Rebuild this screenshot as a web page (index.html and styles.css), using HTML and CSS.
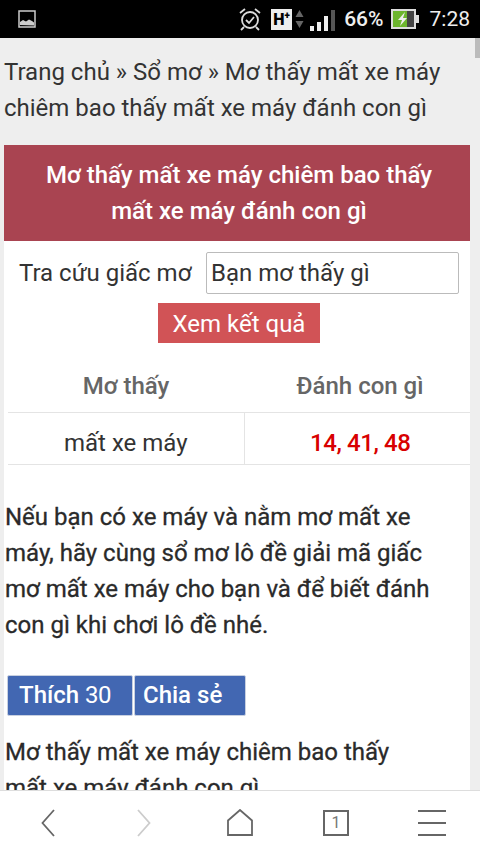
FILE: index.html
```html
<!DOCTYPE html>
<html lang="vi">
<head>
    <meta charset="UTF-8">
    <meta name="viewport" content="width=device-width, initial-scale=1.0">
    <title>Mơ thấy mất xe máy</title>
    <link rel="stylesheet" href="styles.css">
</head>
<body>
    <div class="status-bar">
        <svg class="pic-icon" width="18" height="18" viewBox="0 0 18 18">
            <rect x="1" y="1" width="16" height="16" fill="none" stroke="#ccc" stroke-width="1.5"/>
            <path d="M2 15v-3l3-2 3 1.500 3-2 3 1.500 2 1.500v3z" fill="#ccc"/>
        </svg>
        <div class="status-right">
            <svg class="alarm" width="24" height="24" viewBox="0 0 24 24" fill="none" stroke="#ddd">
                <circle cx="12" cy="13" r="8" stroke-width="1.800"/>
                <path d="M8 13l3 3 5-6" stroke-width="1.800"/>
                <path d="M2 6l5-4M22 6l-5-4M6 20l-3 3M18 20l3 3" stroke-width="1.800"/>
            </svg>
            <span class="net-badge">H<sup>+</sup></span>
            <svg class="net-arrows" width="9" height="20" viewBox="0 0 9 20">
                <path d="M4.500 1l4 7h-8z" fill="#666"/>
                <path d="M4.500 19l4-7h-8z" fill="#666"/>
            </svg>
            <svg class="signal" width="25" height="22" viewBox="0 0 25 22">
                <rect x="0" y="16" width="4" height="5" fill="#eee"/>
                <rect x="7" y="12" width="4" height="9" fill="#eee"/>
                <rect x="14" y="6" width="4" height="15" fill="#eee"/>
                <rect x="21" y="0" width="4" height="21" fill="#555"/>
            </svg>
            <span class="batt-text">66%</span>
            <svg class="battery" width="28" height="20" viewBox="0 0 28 20">
                <rect x="0" y="0" width="25" height="20" fill="#ddd"/>
                <rect x="2" y="2" width="14" height="16" fill="#6cb52d"/>
                <rect x="16" y="2" width="7" height="16" fill="#444"/>
                <rect x="25" y="6" width="3" height="8" fill="#ddd"/>
                <path d="M14 3l-7 8h4l-2 6 7-8h-4z" fill="#eee"/>
            </svg>
            <span class="clock">7:28</span>
        </div>
    </div>

    <div class="viewport">
        <div class="scroll-thumb"></div>
        <div class="page">
            <p class="breadcrumb">Trang chủ » Sổ mơ » Mơ thấy mất xe máy chiêm bao thấy mất xe máy đánh con gì</p>

            <h1 class="title">Mơ thấy mất xe máy chiêm bao thấy<br>mất xe máy đánh con gì</h1>

            <div class="content">
                <div class="search-row">
                    <label for="dream">Tra cứu giấc mơ</label>
                    <input type="text" id="dream" placeholder="Bạn mơ thấy gì">
                </div>
                <div class="search-action">
                    <button class="search-btn">Xem kết quả</button>
                </div>

                <table class="dream-table">
                    <tr>
                        <th>Mơ thấy</th>
                        <th>Đánh con gì</th>
                    </tr>
                    <tr>
                        <td>mất xe máy</td>
                        <td class="numbers">14, 41, 48</td>
                    </tr>
                </table>

                <p class="intro">Nếu bạn có xe máy và nằm mơ mất xe máy, hãy cùng sổ mơ lô đề giải mã giấc mơ mất xe máy cho bạn và để biết đánh con gì khi chơi lô đề nhé.</p>

                <div class="social">
                    <a class="fb-btn like">Thích <span class="count">30</span></a>
                    <a class="fb-btn share">Chia sẻ</a>
                </div>

                <p class="article">Mơ thấy mất xe máy chiêm bao thấy mất xe máy đánh con gì</p>
            </div>
        </div>
    </div>

    <nav class="bottom-nav">
        <svg width="14" height="28" viewBox="0 0 14 28" fill="none" stroke="#666" stroke-width="1.800"><path d="M13 1L1.500 14 13 27"/></svg>
        <svg width="14" height="28" viewBox="0 0 14 28" fill="none" stroke="#ccc" stroke-width="1.800"><path d="M1 1l11.500 13L1 27"/></svg>
        <svg width="26" height="27" viewBox="0 0 26 27" fill="none" stroke="#666" stroke-width="1.800"><path d="M1 11.500L13 1l12 10.500V26H1z"/></svg>
        <span class="tab-count">1</span>
        <div class="menu-icon"><i></i><i></i><i></i></div>
    </nav>
</body>
</html>
```

FILE: styles.css
```css
* {
    box-sizing: border-box;
}
html, body {
    margin: 0;
    padding: 0;
}
body {
    width: 480px;
    height: 854px;
    overflow: hidden;
    display: flex;
    flex-direction: column;
    font-family: Roboto, sans-serif;
    background-color: #eee;
}

/* status bar */
.status-bar {
    height: 38px;
    flex: none;
    background-color: #000;
    display: flex;
    align-items: center;
    justify-content: space-between;
    padding: 0 10px 0 18px;
}
.status-right {
    display: flex;
    align-items: center;
}
.net-badge {
    width: 21px;
    height: 21px;
    margin-left: 9px;
    background-color: #eee;
    color: #000;
    font-size: 16px;
    font-weight: 900;
    line-height: 21px;
    text-align: center;
}
.net-badge sup {
    font-size: 10px;
    line-height: 0;
}
.net-arrows {
    margin-left: 3px;
}
.signal {
    margin-left: 6px;
    margin-top: 3px;
}
.batt-text {
    margin-left: 9px;
    color: #eee;
    font-size: 21px;
    font-weight: 500;
}
.battery {
    margin-left: 7px;
}
.clock {
    margin-left: 11px;
    color: #eee;
    font-size: 21px;
    font-weight: 400;
}

/* page area */
.viewport {
    flex: 1;
    position: relative;
    overflow: hidden;
    min-height: 0;
}
.scroll-thumb {
    position: absolute;
    top: 0;
    right: 0;
    width: 5px;
    height: 20px;
    background-color: #bbb;
}
.page {
    padding: 16px 10px 0 4px;
}
.breadcrumb {
    margin: 0 0 19px 0;
    font-size: 24px;
    line-height: 36px;
    color: #333;
}
.title {
    margin: 0;
    padding: 0 28px 0 32px;
    height: 96px;
    display: flex;
    align-items: center;
    justify-content: center;
    background-color: #a94451;
    color: #fff;
    font-size: 24px;
    font-weight: 500;
    line-height: 36px;
    text-align: center;
}
.content {
    background-color: #fff;
    height: 560px;
}
.search-row {
    display: flex;
    align-items: center;
    padding: 11px 11px 0 15px;
}
.search-row label {
    width: 187px;
    font-size: 24px;
    color: #333;
}
.search-row input {
    width: 253px;
    height: 42px;
    padding: 0 4px;
    border: 1px solid #bbb;
    border-radius: 2px;
    font-family: Roboto, sans-serif;
    font-size: 24px;
    background-color: #fff;
}
.search-row input::placeholder {
    color: #333;
    opacity: 1;
}
.search-action {
    display: flex;
    justify-content: center;
    padding: 9px 0 0 0;
}
.search-btn {
    width: 162px;
    height: 40px;
    margin-left: 4px;
    padding: 2px 0 0 0;
    border: none;
    background-color: #d15356;
    color: #fff;
    font-family: Roboto, sans-serif;
    font-size: 24px;
}
.dream-table {
    width: 462px;
    margin: 13px 0 0 4px;
    border-collapse: collapse;
    table-layout: fixed;
}
.dream-table th {
    height: 56px;
    padding-top: 6px;
    font-size: 24px;
    font-weight: 500;
    color: #666;
    border-bottom: 1px solid #e4e4e4;
}
.dream-table td {
    height: 52px;
    padding-top: 10px;
    font-size: 24px;
    color: #333;
    text-align: center;
    border-bottom: 1px solid #e4e4e4;
}
.dream-table th:first-child,
.dream-table td:first-child {
    width: 236px;
}
.dream-table th:last-child,
.dream-table td:last-child {
    padding-left: 7px;
}
.dream-table td:first-child {
    border-right: 1px solid #e4e4e4;
}
.dream-table td.numbers {
    color: #d80000;
    font-weight: 500;
    letter-spacing: -0.4px;
}
.intro {
    margin: 34px 0 0 0;
    padding-left: 1px;
    width: 440px;
    font-size: 24px;
    line-height: 36px;
    color: #2a2a2a;
    -webkit-text-stroke: 0.3px #2a2a2a;
}
.social {
    display: flex;
    gap: 1px;
    margin: 32px 0 0 3px;
}
.fb-btn {
    height: 41px;
    display: block;
    padding-left: 11px;
    background-color: #4267b2;
    border: 1px solid #c8d0e0;
    border-radius: 2px;
    color: #fff;
    font-size: 24px;
    font-weight: 500;
    line-height: 39px;
}
.fb-btn .count {
    font-weight: 400;
    letter-spacing: -0.5px;
}
.like {
    width: 126px;
}
.share {
    width: 112px;
    padding-left: 8px;
}
.article {
    margin: 18px 0 0 0;
    padding-left: 1px;
    width: 420px;
    font-size: 24px;
    line-height: 36px;
    color: #2a2a2a;
    -webkit-text-stroke: 0.3px #2a2a2a;
}

/* browser toolbar */
.bottom-nav {
    height: 64px;
    flex: none;
    background-color: #fff;
    border-top: 1px solid #ddd;
    display: grid;
    grid-template-columns: repeat(5, 96px);
    align-items: center;
    justify-items: center;
}
.tab-count {
    width: 26px;
    height: 26px;
    border: 2px solid #666;
    color: #777;
    font-size: 16px;
    line-height: 22px;
    text-align: center;
}
.menu-icon {
    width: 28px;
    display: flex;
    flex-direction: column;
    gap: 10px;
}
.menu-icon i {
    display: block;
    height: 2px;
    background-color: #666;
}
```
